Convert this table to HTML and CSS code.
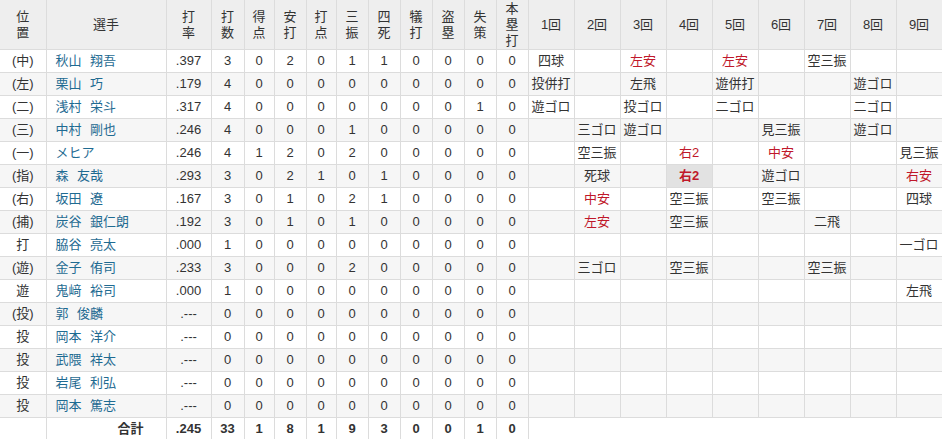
FILE: index.html
```html
<!DOCTYPE html>
<html lang="ja">
<head>
<meta charset="utf-8">
<title>打撃成績</title>
<link rel="stylesheet" href="styles.css">
</head>
<body>
<table class="score">
<colgroup>
<col class="c-pos"><col class="c-name"><col class="c-avg"><col class="c-ab"><col class="c-s30"><col class="c-s32"><col class="c-s30"><col class="c-s32"><col class="c-s32"><col class="c-s32"><col class="c-s32"><col class="c-s32"><col class="c-s32">
<col class="c-inn"><col class="c-inn"><col class="c-inn"><col class="c-inn"><col class="c-inn"><col class="c-inn"><col class="c-inn"><col class="c-inn"><col class="c-inn">
</colgroup>
<thead>
<tr>
<th>位<br>置</th><th>選手</th><th>打<br>率</th><th>打<br>数</th><th>得<br>点</th><th>安<br>打</th><th>打<br>点</th><th>三<br>振</th><th>四<br>死</th><th>犠<br>打</th><th>盗<br>塁</th><th>失<br>策</th><th>本<br>塁<br>打</th>
<th>1回</th><th>2回</th><th>3回</th><th>4回</th><th>5回</th><th>6回</th><th>7回</th><th>8回</th><th>9回</th>
</tr>
</thead>
<tbody>
<tr><td>(中)</td><td class="name"><a href="#">秋山 翔吾</a></td><td>.397</td><td>3</td><td>0</td><td>2</td><td>0</td><td>1</td><td>1</td><td>0</td><td>0</td><td>0</td><td>0</td><td>四球</td><td></td><td class="hit">左安</td><td></td><td class="hit">左安</td><td></td><td>空三振</td><td></td><td></td></tr>
<tr><td>(左)</td><td class="name"><a href="#">栗山 巧</a></td><td>.179</td><td>4</td><td>0</td><td>0</td><td>0</td><td>0</td><td>0</td><td>0</td><td>0</td><td>0</td><td>0</td><td>投併打</td><td></td><td>左飛</td><td></td><td>遊併打</td><td></td><td></td><td>遊ゴロ</td><td></td></tr>
<tr><td>(二)</td><td class="name"><a href="#">浅村 栄斗</a></td><td>.317</td><td>4</td><td>0</td><td>0</td><td>0</td><td>0</td><td>0</td><td>0</td><td>0</td><td>1</td><td>0</td><td>遊ゴロ</td><td></td><td>投ゴロ</td><td></td><td>二ゴロ</td><td></td><td></td><td>二ゴロ</td><td></td></tr>
<tr><td>(三)</td><td class="name"><a href="#">中村 剛也</a></td><td>.246</td><td>4</td><td>0</td><td>0</td><td>0</td><td>1</td><td>0</td><td>0</td><td>0</td><td>0</td><td>0</td><td></td><td>三ゴロ</td><td>遊ゴロ</td><td></td><td></td><td>見三振</td><td></td><td>遊ゴロ</td><td></td></tr>
<tr><td>(一)</td><td class="name"><a href="#">メヒア</a></td><td>.246</td><td>4</td><td>1</td><td>2</td><td>0</td><td>2</td><td>0</td><td>0</td><td>0</td><td>0</td><td>0</td><td></td><td>空三振</td><td></td><td class="hit">右2</td><td></td><td class="hit">中安</td><td></td><td></td><td>見三振</td></tr>
<tr><td>(指)</td><td class="name"><a href="#">森 友哉</a></td><td>.293</td><td>3</td><td>0</td><td>2</td><td>1</td><td>0</td><td>1</td><td>0</td><td>0</td><td>0</td><td>0</td><td></td><td>死球</td><td></td><td class="hit rbi">右2</td><td></td><td>遊ゴロ</td><td></td><td></td><td class="hit">右安</td></tr>
<tr><td>(右)</td><td class="name"><a href="#">坂田 遼</a></td><td>.167</td><td>3</td><td>0</td><td>1</td><td>0</td><td>2</td><td>1</td><td>0</td><td>0</td><td>0</td><td>0</td><td></td><td class="hit">中安</td><td></td><td>空三振</td><td></td><td>空三振</td><td></td><td></td><td>四球</td></tr>
<tr><td>(捕)</td><td class="name"><a href="#">炭谷 銀仁朗</a></td><td>.192</td><td>3</td><td>0</td><td>1</td><td>0</td><td>1</td><td>0</td><td>0</td><td>0</td><td>0</td><td>0</td><td></td><td class="hit">左安</td><td></td><td>空三振</td><td></td><td></td><td>二飛</td><td></td><td></td></tr>
<tr><td>打</td><td class="name"><a href="#">脇谷 亮太</a></td><td>.000</td><td>1</td><td>0</td><td>0</td><td>0</td><td>0</td><td>0</td><td>0</td><td>0</td><td>0</td><td>0</td><td></td><td></td><td></td><td></td><td></td><td></td><td></td><td></td><td>一ゴロ</td></tr>
<tr><td>(遊)</td><td class="name"><a href="#">金子 侑司</a></td><td>.233</td><td>3</td><td>0</td><td>0</td><td>0</td><td>2</td><td>0</td><td>0</td><td>0</td><td>0</td><td>0</td><td></td><td>三ゴロ</td><td></td><td>空三振</td><td></td><td></td><td>空三振</td><td></td><td></td></tr>
<tr><td>遊</td><td class="name"><a href="#">鬼﨑 裕司</a></td><td>.000</td><td>1</td><td>0</td><td>0</td><td>0</td><td>0</td><td>0</td><td>0</td><td>0</td><td>0</td><td>0</td><td></td><td></td><td></td><td></td><td></td><td></td><td></td><td></td><td>左飛</td></tr>
<tr><td>(投)</td><td class="name"><a href="#">郭 俊麟</a></td><td>.---</td><td>0</td><td>0</td><td>0</td><td>0</td><td>0</td><td>0</td><td>0</td><td>0</td><td>0</td><td>0</td><td></td><td></td><td></td><td></td><td></td><td></td><td></td><td></td><td></td></tr>
<tr><td>投</td><td class="name"><a href="#">岡本 洋介</a></td><td>.---</td><td>0</td><td>0</td><td>0</td><td>0</td><td>0</td><td>0</td><td>0</td><td>0</td><td>0</td><td>0</td><td></td><td></td><td></td><td></td><td></td><td></td><td></td><td></td><td></td></tr>
<tr><td>投</td><td class="name"><a href="#">武隈 祥太</a></td><td>.---</td><td>0</td><td>0</td><td>0</td><td>0</td><td>0</td><td>0</td><td>0</td><td>0</td><td>0</td><td>0</td><td></td><td></td><td></td><td></td><td></td><td></td><td></td><td></td><td></td></tr>
<tr><td>投</td><td class="name"><a href="#">岩尾 利弘</a></td><td>.---</td><td>0</td><td>0</td><td>0</td><td>0</td><td>0</td><td>0</td><td>0</td><td>0</td><td>0</td><td>0</td><td></td><td></td><td></td><td></td><td></td><td></td><td></td><td></td><td></td></tr>
<tr><td>投</td><td class="name"><a href="#">岡本 篤志</a></td><td>.---</td><td>0</td><td>0</td><td>0</td><td>0</td><td>0</td><td>0</td><td>0</td><td>0</td><td>0</td><td>0</td><td></td><td></td><td></td><td></td><td></td><td></td><td></td><td></td><td></td></tr>
<tr class="total"><td></td><td class="total-label">合計</td><td>.245</td><td>33</td><td>1</td><td>8</td><td>1</td><td>9</td><td>3</td><td>0</td><td>0</td><td>1</td><td>0</td><td class="blank" colspan="9"></td></tr>
</tbody>
</table>
</body>
</html>
```

FILE: styles.css
```css
html, body {
  margin: 0;
  padding: 0;
  background: #fff;
}
body {
  font-family: "Liberation Sans", "Noto Sans CJK JP", sans-serif;
  font-size: 13px;
  color: #333;
}
.score {
  border-collapse: collapse;
  table-layout: fixed;
  width: 942px;
}
.c-pos { width: 46px; }
.c-name { width: 120px; }
.c-avg { width: 45px; }
.c-ab { width: 33px; }
.c-s30 { width: 30px; }
.c-s32 { width: 32px; }
.c-inn { width: 46px; }

.score th,
.score td {
  border: 1px solid #dcdcdc;
  padding: 0;
  text-align: center;
  white-space: nowrap;
  overflow: hidden;
}
.score tr > :first-child { border-left: none; }
.score th {
  background: #eeeeee;
  font-weight: normal;
  height: 49px;
  line-height: 16px;
  border-top: none;
}
.score td {
  height: 22px;
  line-height: 22px;
}
.score tbody tr:nth-child(even) td {
  background: #f6f6f6;
}
.score td.name {
  text-align: left;
  padding-left: 9px;
  word-spacing: 5px;
}
.name a {
  color: #1f6b92;
  text-decoration: none;
}
.hit {
  color: #c0182a;
}
.score tbody tr td.rbi {
  background: #e2e2e2;
  font-weight: bold;
}
.total td {
  font-weight: bold;
}
.score td.total-label {
  text-align: right;
  padding-right: 22px;
}
```
